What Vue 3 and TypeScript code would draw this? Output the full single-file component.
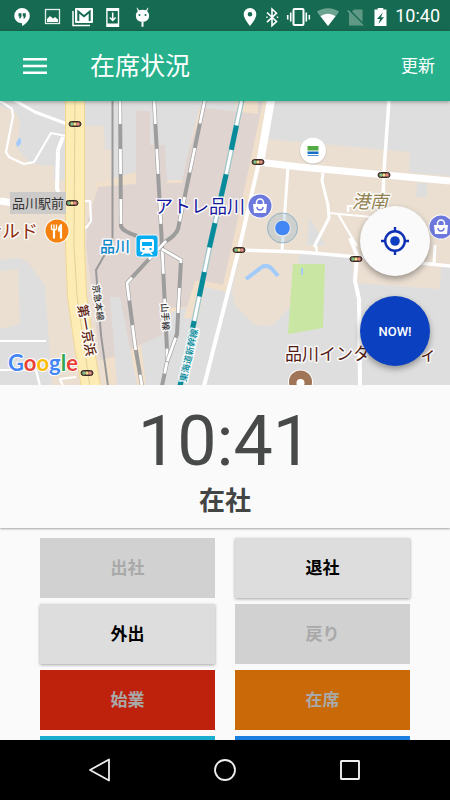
<script setup lang="ts">
import { ref } from 'vue'

interface Action {
  label: string
  tone: string
  disabled: boolean
}

const time = ref<string>('10:41')
const status = ref<string>('在社')

const actions: Action[] = [
  { label: '出社', tone: 'muted', disabled: true },
  { label: '退社', tone: 'plain', disabled: false },
  { label: '外出', tone: 'plain', disabled: false },
  { label: '戻り', tone: 'muted', disabled: true },
  { label: '始業', tone: 'red', disabled: true },
  { label: '在席', tone: 'orange', disabled: true },
  { label: '', tone: 'cyan', disabled: true },
  { label: '', tone: 'blue', disabled: true },
]

const signals: [number, number][] = [
  [75, 124], [72, 203], [258, 162], [239, 250], [384, 175], [356, 259], [87, 373],
]

const rails: string[] = [
  'M120 99 L121 226 Q122 231 137 236',
  'M154 99 L162 245 L167 350 L167 362 L162 386',
  'M205 99 L178 229 Q176 235 165 242 L150 258 L127 283 L135 345 L142 386',
  'M162 249 L181 260 L177 334 L167 362',
]
</script>

<template>
  <div class="screen">
    <header class="status-bar">
      <div class="notices">
        <svg class="notice" viewBox="0 0 24 24"><path fill="#fff" d="M12 4a7.700 7.700 0 0 0-7.700 7.700c0 4.200 3.400 7.500 7.700 7.500V22c4-2 7.800-6 7.800-10.300A7.700 7.700 0 0 0 12 4z" /><path fill="#176a52" d="M8.500 9.300h3v3.200l-1.300 2H9l.6-2H8.500zM12.800 9.300h3v3.200l-1.300 2h-1.200l.6-2h-1.100z" /></svg>
        <svg class="notice" viewBox="0 0 24 24"><rect x="5.500" y="5.500" width="14" height="14" fill="none" stroke="#e3eeea" stroke-width="1.300" /><path fill="#fff" d="M7 18v-3l3-3 3 2.500 2-1.500 3 2.500V18z" /></svg>
        <svg class="notice" viewBox="0 0 24 24"><path d="M3 7v14.500h17" fill="none" stroke="#fff" stroke-width="1.500" /><rect x="5" y="4" width="18" height="15" rx="1" fill="#fff" /><path d="M8.300 17V7.500l5.700 4.700 5.700-4.700V17" fill="none" stroke="#176a52" stroke-width="2" /></svg>
        <svg class="notice" viewBox="0 0 24 24"><rect x="6.200" y="4" width="13" height="19" rx=".6" fill="#fff" /><rect x="7.600" y="7" width="10.200" height="12.500" fill="#176a52" /><path d="M12.700 8.500v8M9.800 13.500l2.900 3 2.900-3" fill="none" stroke="#fff" stroke-width="1.500" /></svg>
        <svg class="notice" viewBox="0 0 24 24"><path fill="#fff" d="M7 3.500l2 2.800c2-.8 5-.8 7 0l2-2.800.4.500-1.300 3.200c1.500 1.400 2.100 3 2 5-.2 3.600-3 5.600-6.600 5.600s-6.400-2-6.600-5.600c-.1-2 .5-3.600 2-5L6.600 4z" /><path d="M12.500 18.500V22" stroke="#fff" stroke-width="2" stroke-linecap="round" /><circle cx="9.500" cy="11" r="1" fill="#176a52" /><circle cx="15.500" cy="11" r="1" fill="#176a52" /></svg>
      </div>
      <div class="system">
        <svg width="20" height="24" viewBox="0 0 20 24"><path fill="#fff" fill-rule="evenodd" d="M10 4a6.300 6.300 0 0 0-6.300 6.300C3.700 15 10 22 10 22s6.300-7 6.300-11.700A6.300 6.300 0 0 0 10 4zm0 4a2.300 2.300 0 1 1 0 4.600A2.300 2.300 0 0 1 10 8z" /></svg>
        <svg width="24" height="24" viewBox="0 0 24 24"><path d="M7 8.500l9.500 9-4.500 4.200V5l4.500 4.200-9.500 9" fill="none" stroke="#fff" stroke-width="1.600" /><path d="M7 12.500v1.500M17.500 12.500v1.500" stroke="#fff" stroke-width="1.400" /></svg>
        <svg width="28" height="24" viewBox="0 0 28 24"><rect x="9.500" y="5" width="10" height="16" rx="1" fill="none" stroke="#fff" stroke-width="2" /><path d="M6.700 8.500v9M3.700 11v4.500M22.300 8.500v9M25.300 11v4.500" stroke="#fff" stroke-width="1.600" /></svg>
        <svg width="32" height="24" viewBox="0 0 32 24"><path fill="#6da490" d="M5 8C11 3 21 3 27 8L16 22z" /><path fill="#fff" d="M8.500 12.300c4.500-3.400 10.500-3.400 15 0L16 22z" /></svg>
        <svg width="24" height="24" viewBox="0 0 24 24"><path fill="#5f9985" d="M4.500 6l14 14v1.500H5V10zM10 5.500h8.500V18L8 7.500z" /><path d="M3.500 6.500l15.500 15" stroke="#5f9985" stroke-width="1.500" /></svg>
        <svg width="24" height="24" viewBox="0 0 24 24"><path fill="#fff" d="M6.500 5.500h3.200V4h5.600v1.500h3.200V22h-12z" /><path fill="#176a52" d="M14.700 8.500L9 15h3l-1.500 5 5.500-6.700h-3z" /></svg>
        <span class="clock">10:40</span>
      </div>
    </header>

    <div class="toolbar">
      <button class="menu" type="button" aria-label="メニュー">
        <svg width="24" height="20" viewBox="0 0 24 20"><path d="M0 3.300h24M0 10h24M0 16.700h24" stroke="#fff" stroke-width="2.600" /></svg>
      </button>
      <h1 class="title">在席状況</h1>
      <button class="refresh" type="button">更新</button>
    </div>

    <section class="map">
      <svg class="map-canvas" viewBox="0 101 450 284" preserveAspectRatio="xMidYMid slice">
        <rect x="0" y="101" width="450" height="284" fill="#dedede" />
        <!-- city blocks -->
        <g fill="#ebdfd2">
          <path d="M0 106L16 113 20 122 17 148 30 163 53 167V180H66V385H52L45 286 34 271 28 262 18 258 0 260z" />
          <path d="M0 180L10 168 11 177 23 178 24 168 54 165V190H0z" />
          <path d="M0 271L18 269 20 324 0 329z" />
          <path d="M66 126H104L105 149 112 150V260L122 385H66z" />
          <path d="M232 245L256 147 268 139 300 142 410 152 409 172 450 176V266L441 267 440 289 353 283V258L300 252 295 280 292 305 272 326 255 325 235 305 232 290 240 252z" />
        </g>
        <path fill="#efdfcb" d="M96 183L136 172 150 172V385H105L88 250zM165 180H184L188 111 204 108 236 114V101H270L258 165 227 292 205 287 198 319 184 318 187 307 150 320z" />
        <g fill="#dfd4cf">
          <path d="M98 187L136 184V111H150L151 145H165L167 183H182L187 155 203 108 258 114V101H263L241 205 223 285 205 281 195 281 187 307 162 308V335L140 345 120 355 100 360 86 245 88 220z" />
          <path d="M136 172H165V330H136z" />
        </g>
        <path fill="#dedede" d="M123 101H201L183 174 167 175 165 145 150 145V111H136V170L123 173zM110 297H120L137 385H117zM417 183H427V197H416zM309 217L325 245H307zM141 345L150 340V385H146z" />
        <path fill="#c9e6a2" d="M293 264L325 264 323 328 288 334z" />
        <path d="M246 279L262 267Q267 264 272 269L278 276" fill="none" stroke="#a2cbfa" stroke-width="4" />
        <path fill="#a2cbfa" d="M16 143l3-5 2 1v5l-4 3zM301 268h2v7h-2z" />

        <!-- streets -->
        <g fill="none" stroke="#fff" stroke-width="2.200" stroke-linejoin="round">
          <path d="M-1 100L12 109 13 116 6 152 9 157 24 164 34 162 51 133 66 136" />
          <path d="M82 201L90 201 91 221 87 227 82 229M0 341H46M0 370L36 370 40 386M76 377L60 379 63 386" />
          <path d="M329 213L371 217M338 214L357 246M348 212L348 206 361 206M316 245L317 253" />
          <path d="M288 167L282 251M323 173L322 181 328 205 329 218 314 247M435 245L434 264" stroke-width="3" />
          <path d="M389 100L384 171 383 200" stroke-width="3.500" />
          <path d="M63 137L58 150 57 189 64 204" stroke-width="4" />
          <path d="M14 100L35 112 70 125" stroke-width="3" />
          <path d="M0 201L14 203" stroke-width="7" />
          <path d="M271 100L260 163" stroke-width="8" />
          <path d="M259 162L240 245 204 386" stroke-width="4" />
          <path d="M258 162L300 167 450 181" stroke-width="7" />
          <path d="M238 250L300 252 358 257 450 266" stroke-width="3.500" />
          <path d="M350 238L357 255 355 281 359 299 360 386" stroke-width="4" />
        </g>

        <path d="M75 99L75 150 75 245 77 296 84 345 91 387" fill="none" stroke="#f1d795" stroke-width="20" />
        <path d="M75 99L75 150 75 245 77 296 84 345 91 387" fill="none" stroke="#fdecb4" stroke-width="18" />
        <path d="M75 99L74 245 77 296 84 345 90 387" fill="none" stroke="#e2d09a" stroke-width="1" />

        <!-- railways -->
        <path d="M112.500 99V241L96 270 101 335 108 386" fill="none" stroke="#999" stroke-width="2" />
        <g v-for="rail in rails" :key="rail" fill="none">
          <path :d="rail" stroke="#9d9d9d" stroke-width="4" />
          <path :d="rail" stroke="#fff" stroke-width="2.800" stroke-dasharray="25 25" />
        </g>
        <path d="M242 99L226 175 210 245 194 322 180 386" fill="none" stroke="#9ec6ca" stroke-width="5.500" />
        <path d="M242 99L226 175 210 245 194 322 180 386" fill="none" stroke="#fff" stroke-width="3" />
        <path d="M242 99L226 175 210 245 194 322 180 386" fill="none" stroke="#078b9b" stroke-width="5" stroke-dasharray="25 25" stroke-dashoffset="-27" />

        <g v-for="[x, y] in signals" :key="`${x}-${y}`">
          <rect :x="x - 6" :y="y - 2.500" width="12" height="5" rx="2.500" fill="#685848" stroke="#3c2924" />
          <circle :cx="x - 3" :cy="y" r="1.600" fill="#76c68b" />
          <circle :cx="x" :cy="y" r="1.600" fill="#fbe08a" />
          <circle :cx="x + 3" :cy="y" r="1.600" fill="#f08a8a" />
        </g>

        <!-- labels -->
        <rect x="10" y="192" width="56" height="22" fill="#cdcbc9" />
        <text class="lbl dark" x="12" y="208" font-size="13">品川駅前</text>
        <text class="lbl halo food" x="38" y="238" font-size="18" text-anchor="end">ナルド</text>
        <text class="lbl halo shop" x="155" y="213" font-size="18">アトレ品川</text>
        <text class="lbl halo rail" x="100" y="252" font-size="15">品川</text>
        <text class="lbl halo area" x="352" y="208" font-size="18">港南</text>
        <text class="lbl halo place" x="285" y="360" font-size="17">品川インターシティ</text>
        <text class="lbl halo road" font-size="13" text-anchor="middle" transform="translate(82 331) rotate(80)">第一京浜</text>
        <text class="lbl halo line" font-size="9" text-anchor="middle" transform="translate(95 303) rotate(82)">京急本線</text>
        <text class="lbl halo line" font-size="9" text-anchor="middle" transform="translate(162 317) rotate(86)">山手線</text>
        <text class="lbl halo shinkansen" font-size="9" text-anchor="middle" transform="translate(192 356) rotate(-77)">東海道新幹線</text>

        <!-- markers -->
        <g>
          <circle cx="57" cy="231" r="12.500" fill="#fff" />
          <circle cx="57" cy="231" r="11.500" fill="#f5820f" />
          <path d="M51.500 224.500v5M54 224.500v5M56.500 224.500v5M51.500 229.500h5" fill="none" stroke="#fff" stroke-width="1.300" />
          <path d="M54 229v9.500M61 228v10.500" stroke="#fff" stroke-width="2.200" />
          <path fill="#fff" d="M62 224c-3 0-4.200 3-4 7.500h4z" />
        </g>
        <g v-for="bag in [[260, 206], [441, 227]]" :key="bag[0]" :transform="`translate(${bag[0]} ${bag[1]})`">
          <circle r="12.500" fill="#fff" />
          <circle r="11.500" fill="#6d78dc" />
          <path fill="#fff" d="M-7-2H7L6 7H-6z" />
          <path d="M-3.500-2v-1.500a3.500 3.500 0 0 1 7 0V-2" fill="none" stroke="#fff" stroke-width="1.600" />
          <path d="M-3 1a3 3 0 0 0 6 0" fill="none" stroke="#6d78dc" stroke-width="1.400" />
        </g>
        <rect x="136" y="235" width="22" height="22" rx="3" fill="#08adf1" stroke="#fff" stroke-width=".8" />
        <path fill="#fff" fill-rule="evenodd" d="M142 239h10q2 0 2 2v9q0 2-2 2h-10q-2 0-2-2v-9q0-2 2-2zm0 3v4h10v-4zm.5 6v2h2v-2zm7 0v2h2v-2zM143 252h8l2 3h-2l-1-1.500h-6l-1 1.500h-2z" />
        <circle cx="313" cy="151" r="13.500" fill="#c9c3bd" />
        <circle cx="313" cy="150.500" r="13" fill="#fff" />
        <path fill="#52aa43" d="M307.500 146h11v4.500h-11z" />
        <path fill="#176dc5" d="M307.500 151.500h11v2.600h-11zM307.500 155.300h11v.7h-11z" />
        <circle cx="282.500" cy="228" r="15" fill="#659bb7" fill-opacity=".22" stroke="#7da8c3" stroke-width=".8" />
        <circle cx="282.500" cy="228.500" r="8.500" fill="#e4e6e7" />
        <circle cx="282.500" cy="228" r="7.300" fill="#4285f4" />
        <circle cx="300.500" cy="382" r="12.500" fill="#fff" />
        <circle cx="300.500" cy="382" r="11.500" fill="#a07456" />
        <circle cx="300.500" cy="383" r="4" fill="#fff" />

        <text class="google" x="8" y="371" font-size="22"><tspan fill="#4285f4">G</tspan><tspan fill="#ea4335">o</tspan><tspan fill="#fbbc05">o</tspan><tspan fill="#4285f4">g</tspan><tspan fill="#34a853">l</tspan><tspan fill="#ea4335">e</tspan></text>
      </svg>
      <div class="fabs">
        <button class="fab locate" type="button" aria-label="現在地">
          <svg width="28" height="28" viewBox="0 0 28 28"><circle cx="14" cy="14" r="9.800" fill="none" stroke="#0d30b5" stroke-width="2.400" /><circle cx="14" cy="14" r="4.800" fill="#0d3fc0" /><path d="M14 0v4M14 24v4M0 14h4M24 14h4" stroke="#0d30b5" stroke-width="2.400" /></svg>
        </button>
        <button class="fab now" type="button">NOW!</button>
      </div>
    </section>

    <section class="summary">
      <time class="time">{{ time }}</time>
      <p class="state">{{ status }}</p>
    </section>

    <main class="actions">
      <button
        v-for="action in actions"
        :key="action.tone + action.label"
        type="button"
        class="action"
        :class="action.tone"
        :disabled="action.disabled"
      >{{ action.label }}</button>
    </main>

    <nav class="nav">
      <button type="button" aria-label="戻る"><svg width="24" height="24" viewBox="0 0 24 24"><path d="M21 1.500v21L2 12z" fill="none" stroke="#eee" stroke-width="1.800" stroke-linejoin="round" /></svg></button>
      <button type="button" aria-label="ホーム"><svg width="24" height="24" viewBox="0 0 24 24"><circle cx="12" cy="12" r="10" fill="none" stroke="#eee" stroke-width="1.800" /></svg></button>
      <button type="button" aria-label="履歴"><svg width="24" height="24" viewBox="0 0 24 24"><rect x="3" y="3" width="18" height="18" rx=".5" fill="none" stroke="#eee" stroke-width="1.900" /></svg></button>
    </nav>
  </div>
</template>

<style>
body {
  margin: 0;
  background: #fafafa;
}
</style>

<style scoped>
.screen {
  display: flex;
  flex-direction: column;
  height: 100vh;
  overflow: hidden;
  background: #fafafa;
  font-family: Roboto, "Noto Sans CJK JP", sans-serif;
}

button {
  margin: 0;
  padding: 0;
  border: 0;
  background: none;
  font: inherit;
}

svg {
  display: block;
}

.status-bar {
  display: flex;
  flex: none;
  justify-content: space-between;
  align-items: center;
  height: 31px;
  padding: 0 10px;
  background: #176a52;
}

.notices {
  display: flex;
  gap: 6px;
}

.notice {
  width: 24px;
  height: 24px;
}

.system {
  display: flex;
  align-items: center;
}

.clock {
  margin-left: 3px;
  color: #fff;
  font-size: 18px;
  line-height: 24px;
}

.toolbar {
  position: relative;
  z-index: 1;
  display: flex;
  flex: none;
  align-items: center;
  height: 70px;
  padding: 0 15px 0 23px;
  background: #26b18c;
  box-shadow: 0 1px 4px rgba(0, 0, 0, 0.35);
  color: #fff;
}

.title {
  flex: 1;
  margin: 0 0 0 43px;
  padding-top: 2px;
  font-size: 25px;
  font-weight: 400;
  line-height: 36px;
}

.refresh {
  color: #fff;
  font-size: 17px;
  line-height: 24px;
}

.map {
  position: relative;
  flex: none;
  height: 284px;
}

.map-canvas {
  width: 100%;
  height: 100%;
}

.lbl {
  font-family: "Noto Sans CJK JP", sans-serif;
}

.halo {
  paint-order: stroke;
  stroke: #fff;
  stroke-opacity: 0.85;
  stroke-width: 3px;
  stroke-linejoin: round;
}

.dark { fill: #333; }
.food { fill: #8d2c0d; }
.shop { fill: #1518a0; }
.rail { fill: #0787cf; font-weight: 500; }
.area { fill: #91804f; font-style: italic; }
.place { fill: #551b12; }
.road { fill: #5d2112; font-weight: 500; }
.line { fill: #333; font-weight: 500; }
.shinkansen { fill: #078b9b; font-weight: 500; }

.google {
  font-family: Lato, sans-serif;
  font-weight: 700;
  paint-order: stroke;
  stroke: #fff;
  stroke-width: 2px;
}

.fabs {
  position: absolute;
  right: 20px;
  bottom: 19px;
  display: grid;
  gap: 20px;
}

.fab {
  display: flex;
  align-items: center;
  justify-content: center;
  width: 70px;
  height: 70px;
  border-radius: 50%;
  box-shadow: 0 3px 6px rgba(0, 0, 0, 0.35);
}

.locate {
  background: #fafafa;
}

.now {
  background: #0b41c1;
  color: #fff;
  font-size: 13px;
  font-weight: 500;
}

.summary {
  display: flex;
  flex: none;
  flex-direction: column;
  align-items: center;
  height: 143px;
  background: #fafafa;
  box-shadow: 0 1px 2px rgba(0, 0, 0, 0.35);
}

.time {
  padding-top: 16px;
  color: #484a49;
  font-size: 70px;
  line-height: 80px;
}

.state {
  margin: 0;
  color: #434544;
  font-size: 26px;
  font-weight: 700;
  line-height: 40px;
}

.actions {
  display: grid;
  flex: 1;
  grid-template-columns: 1fr 1fr;
  grid-auto-rows: 60px;
  gap: 6px 20px;
  min-height: 0;
  padding: 10px 40px 0;
  overflow: hidden;
}

.action {
  padding-bottom: 4px;
  color: #a9a9a9;
  font-size: 17px;
  font-weight: 700;
}

.muted { background: #d1d1d1; }

.plain {
  background: #dddddd;
  box-shadow: 0 1px 3px rgba(0, 0, 0, 0.35);
  color: #000;
}

.red { background: #bf220c; }
.orange { background: #c96907; }
.cyan { background: #17aed0; }
.blue { background: #1b7fe0; }

.nav {
  position: relative;
  z-index: 1;
  display: grid;
  flex: none;
  grid-template-columns: repeat(3, 125px);
  justify-content: center;
  height: 60px;
  background: #000;
}

.nav button {
  display: flex;
  align-items: center;
  justify-content: center;
}
</style>
